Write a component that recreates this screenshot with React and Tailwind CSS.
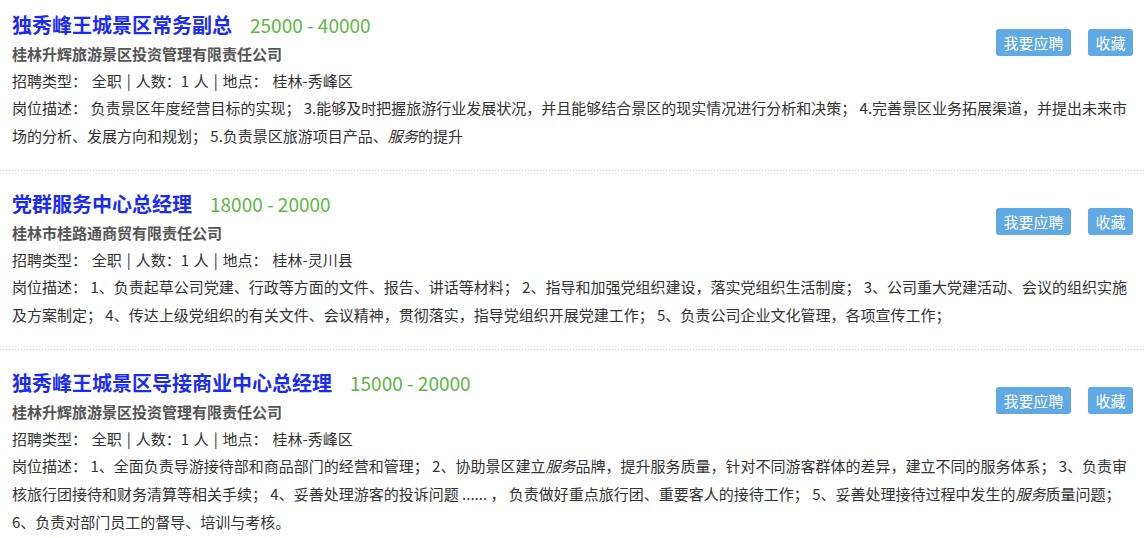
import React from "react";

const jobs = [
  {
    title: "独秀峰王城景区常务副总",
    salary: "25000 - 40000",
    company: "桂林升辉旅游景区投资管理有限责任公司",
    place: "桂林-秀峰区",
    desc: (
      <>
        负责景区年度经营目标的实现； 3.能够及时把握旅游行业发展状况，并且能够结合景区的现实情况进行分析和决策； 4.完善景区业务拓展渠道，并提出未来市场的分析、发展方向和规划； 5.负责景区旅游项目产品、<em>服务</em>的提升
      </>
    ),
  },
  {
    title: "党群服务中心总经理",
    salary: "18000 - 20000",
    company: "桂林市桂路通商贸有限责任公司",
    place: "桂林-灵川县",
    desc: (
      <>
        1、负责起草公司党建、行政等方面的文件、报告、讲话等材料； 2、指导和加强党组织建设，落实党组织生活制度； 3、公司重大党建活动、会议的组织实施及方案制定； 4、传达上级党组织的有关文件、会议精神，贯彻落实，指导党组织开展党建工作； 5、负责公司企业文化管理，各项宣传工作；
      </>
    ),
  },
  {
    title: "独秀峰王城景区导接商业中心总经理",
    salary: "15000 - 20000",
    company: "桂林升辉旅游景区投资管理有限责任公司",
    place: "桂林-秀峰区",
    desc: (
      <>
        1、全面负责导游接待部和商品部门的经营和管理； 2、协助景区建立<em>服务</em>品牌，提升服务质量，针对不同游客群体的差异，建立不同的服务体系； 3、负责审核旅行团接待和财务清算等相关手续； 4、妥善处理游客的投诉问题 ...... ， 负责做好重点旅行团、重要客人的接待工作； 5、妥善处理接待过程中发生的<em>服务</em>质量问题； 6、负责对部门员工的督导、培训与考核。
      </>
    ),
  },
];

function Job({ job, first, last }) {
  return (
    <div>
      <div className={`px-[12px] ${first ? "pt-[10px]" : "pt-[18px]"} ${last ? "pb-[10px]" : "pb-[20px]"}`}>
        <div className="flex">
          <div className="flex-1">
            <div className="flex items-center h-[30px]">
              <span className="text-[20px] font-bold text-[#1b2bf7] leading-[30px]">
                {job.title}
              </span>
              <span className="ml-[18px] text-[19px] text-[#5cb845] leading-[30px]">
                {job.salary}
              </span>
            </div>
            <div className="h-[28px] leading-[28px] text-[15px] font-bold text-[#555]">
              {job.company}
            </div>
          </div>
          <div className="flex items-start gap-[17px] pt-[19px]">
            <button className="w-[75px] h-[27px] rounded-[3px] bg-[#5fa9e4] text-white text-[15px] leading-[27px] text-center">
              我要应聘
            </button>
            <button className="w-[45px] h-[27px] rounded-[3px] bg-[#5fa9e4] text-white text-[15px] leading-[27px] text-center">
              收藏
            </button>
          </div>
        </div>
        <div className="h-[26px] leading-[26px] text-[15px] text-[#333] [word-spacing:1.5px]">
          招聘类型： 全职 | 人数：1 人 | 地点： {job.place}
        </div>
        <div className="leading-[28px] text-[15px] text-[#333]">
          岗位描述： {job.desc}
        </div>
      </div>
      {!last && (
        <div className="h-px bg-[repeating-linear-gradient(to_right,#c4c4c4_0px,#c4c4c4_1px,transparent_1px,transparent_3px)]" />
      )}
    </div>
  );
}

export default function App() {
  return (
    <div
      className="w-[1145px] bg-white"
      style={{ fontFamily: '"Noto Sans CJK SC", "Noto Sans", sans-serif' }}
    >
      {jobs.map((j, i) => (
        <Job key={i} job={j} first={i === 0} last={i === jobs.length - 1} />
      ))}
    </div>
  );
}
